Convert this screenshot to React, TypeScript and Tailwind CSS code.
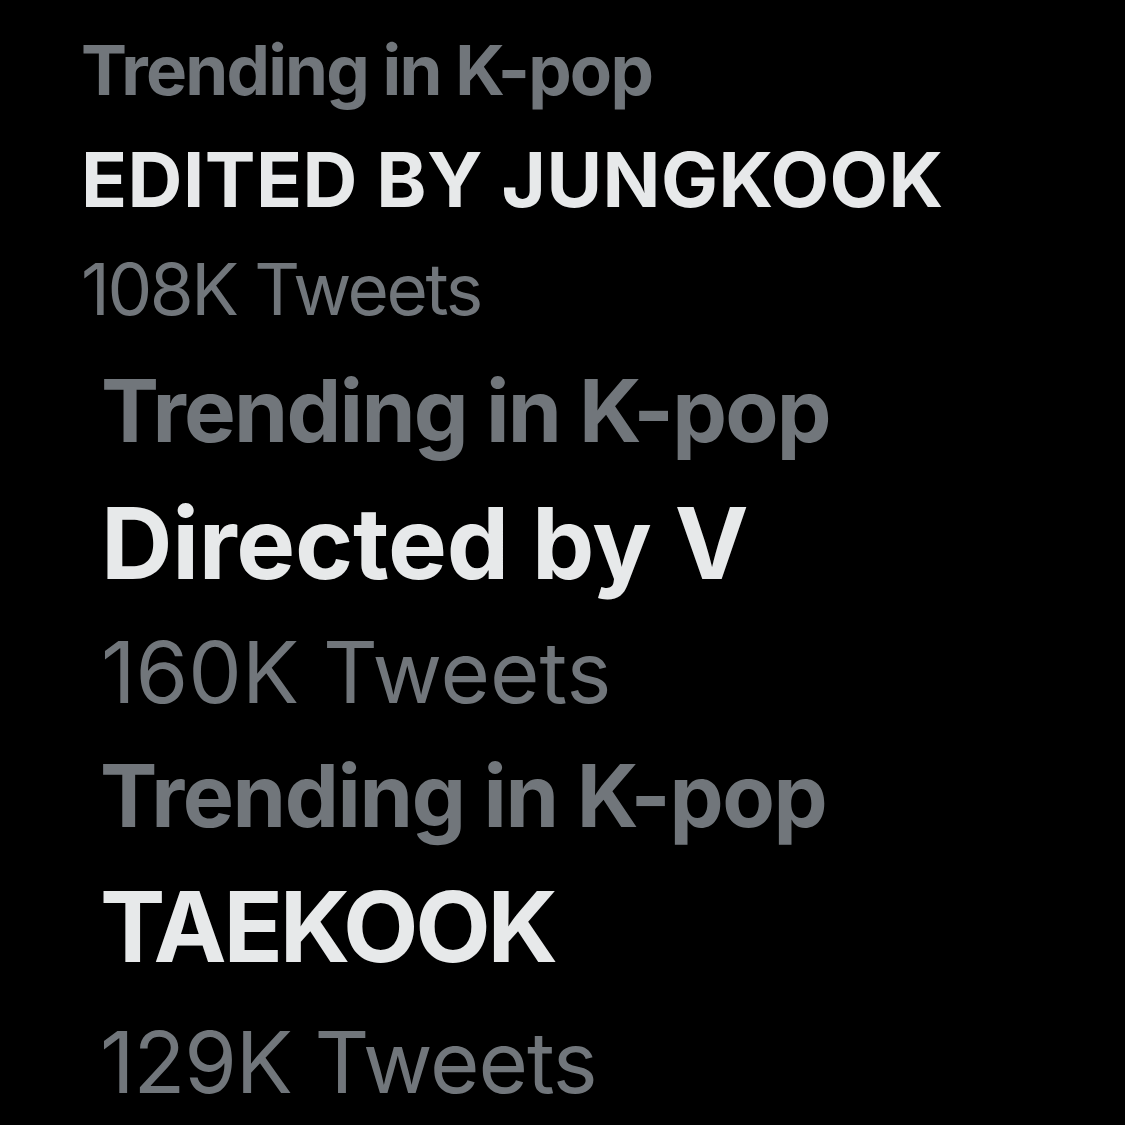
const font = { fontFamily: 'Inter, "Liberation Sans", sans-serif' };

type Trend = {
  pad: string;
  topic: string;
  topicClass: string;
  name: string;
  nameClass: string;
  count: string;
  countClass: string;
};

// three trend cards, each pasted in at its own size
const trends: Trend[] = [
  {
    pad: 'pl-[81px] pt-[15px]',
    topic: 'Trending in K-pop',
    topicClass: 'text-[69px] h-[110px] leading-[110px] tracking-[-0.026em]',
    name: 'EDITED BY JUNGKOOK',
    nameClass: 'text-[76px] h-[109px] leading-[109px] tracking-[0.006em]',
    count: '108K Tweets',
    countClass: 'text-[71px] h-[110px] leading-[110px] tracking-[-0.034em]',
  },
  {
    pad: 'pl-[101px] pt-[3px]',
    topic: 'Trending in K-pop',
    topicClass: 'text-[87px] h-[128px] leading-[128px] tracking-[-0.02em]',
    name: 'Directed by V',
    nameClass: 'text-[99px] h-[137px] leading-[137px] tracking-[-0.003em]',
    count: '160K Tweets',
    countClass: 'text-[85px] h-[122px] leading-[122px]',
  },
  {
    pad: 'pl-[100px]',
    topic: 'Trending in K-pop',
    topicClass: 'text-[86px] h-[124px] leading-[124px] tracking-[-0.016em]',
    name: 'TAEKOOK',
    nameClass: 'text-[98px] h-[137px] leading-[137px] tracking-[-0.033em]',
    count: '129K Tweets',
    countClass: 'text-[85px] h-[136px] leading-[136px] tracking-[-0.013em]',
  },
];

function TrendItem({ t }: { t: Trend }) {
  return (
    <div className={t.pad}>
      <div className={`${t.topicClass} font-bold text-[#71767b] whitespace-nowrap`}>{t.topic}</div>
      <div className={`${t.nameClass} font-bold text-[#e7e9ea] whitespace-nowrap`}>{t.name}</div>
      <div className={`${t.countClass} font-normal text-[#71767b] whitespace-nowrap`}>{t.count}</div>
    </div>
  );
}

export default function App() {
  return (
    <main className="w-[1125px] h-[1125px] bg-black overflow-hidden flex flex-col" style={font}>
      {trends.map((t) => (
        <TrendItem key={t.name} t={t} />
      ))}
    </main>
  );
}
